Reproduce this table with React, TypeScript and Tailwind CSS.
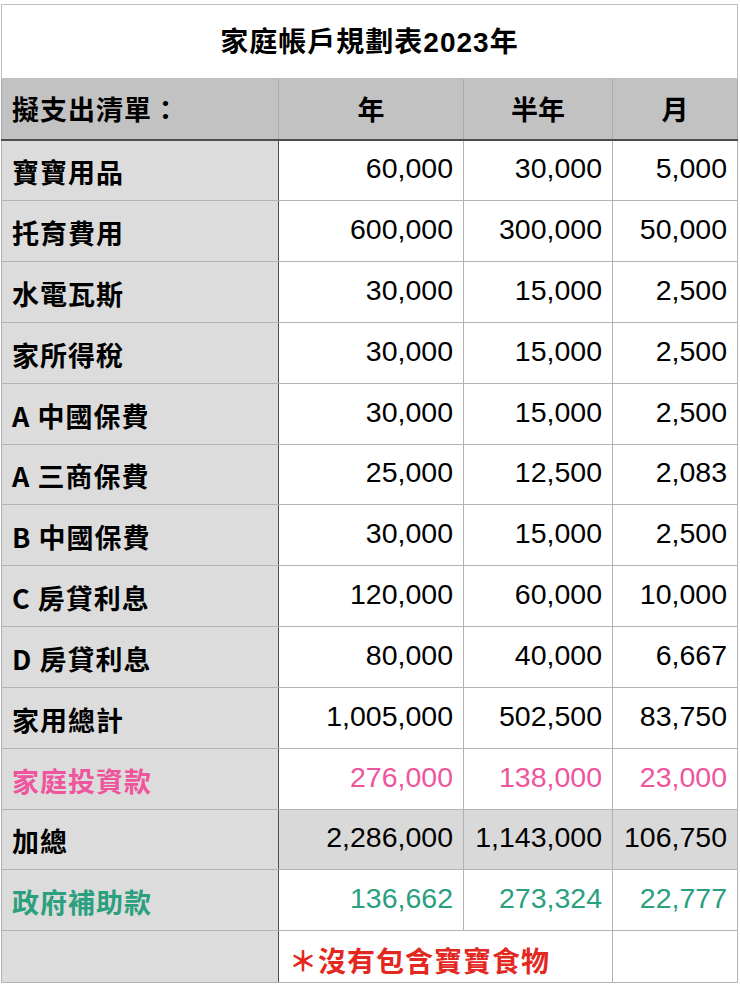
import React from 'react';

type Row = {
  label: string;
  values: [string, string, string];
  tone?: 'pink' | 'green' | 'total';
};

const rows: Row[] = [
  { label: '寶寶用品', values: ['60,000', '30,000', '5,000'] },
  { label: '托育費用', values: ['600,000', '300,000', '50,000'] },
  { label: '水電瓦斯', values: ['30,000', '15,000', '2,500'] },
  { label: '家所得稅', values: ['30,000', '15,000', '2,500'] },
  { label: 'A 中國保費', values: ['30,000', '15,000', '2,500'] },
  { label: 'A 三商保費', values: ['25,000', '12,500', '2,083'] },
  { label: 'B 中國保費', values: ['30,000', '15,000', '2,500'] },
  { label: 'C 房貸利息', values: ['120,000', '60,000', '10,000'] },
  { label: 'D 房貸利息', values: ['80,000', '40,000', '6,667'] },
  { label: '家用總計', values: ['1,005,000', '502,500', '83,750'] },
  { label: '家庭投資款', values: ['276,000', '138,000', '23,000'], tone: 'pink' },
  { label: '加總', values: ['2,286,000', '1,143,000', '106,750'], tone: 'total' },
  { label: '政府補助款', values: ['136,662', '273,324', '22,777'], tone: 'green' },
];

const cjk = "font-['Noto_Sans_CJK_TC','Noto_Sans_CJK_SC',sans-serif]";
const num = "font-['Liberation_Sans',Arial,sans-serif]";

export default function App() {
  return (
    <div className="w-[740px] h-[989px] bg-white pt-[4px] pl-[1px]">
      <table className="w-[736px] border-collapse table-fixed text-black">
        <colgroup>
          <col className="w-[277px]" />
          <col className="w-[185px]" />
          <col className="w-[149px]" />
          <col className="w-[125px]" />
        </colgroup>
        <tbody>
          {/* Title */}
          <tr className="h-[74px]">
            <td
              colSpan={4}
              className={`border border-[#bdbdbd] text-center align-middle text-[28px] font-bold tracking-[1px] ${cjk}`}
            >
              家庭帳戶規劃表<span className={num}>2023</span>年
            </td>
          </tr>

          {/* Header */}
          <tr className="h-[61px] bg-[#c1c2c1]">
            <td className={`border border-[#aaaaaa] border-b-[#4d4d4d] border-b-2 pl-[10px] text-[27px] font-bold tracking-[1px] ${cjk}`}>
              擬支出清單：
            </td>
            <td className={`border border-[#aaaaaa] border-b-[#4d4d4d] border-b-2 text-center text-[27px] font-bold ${cjk}`}>年</td>
            <td className={`border border-[#aaaaaa] border-b-[#4d4d4d] border-b-2 text-center text-[27px] font-bold ${cjk}`}>半年</td>
            <td className={`border border-[#aaaaaa] border-b-[#4d4d4d] border-b-2 text-center text-[27px] font-bold ${cjk}`}>月</td>
          </tr>

          {rows.map((r, idx) => {
            const color =
              r.tone === 'pink' ? 'text-[#ee559c]' : r.tone === 'green' ? 'text-[#2ba07f]' : 'text-black';
            const bg = r.tone === 'total' ? 'bg-[#d9d9d9]' : 'bg-white';
            const h = idx % 6 === 5 ? 'h-[60px]' : 'h-[61px]';
            return (
              <tr key={r.label} className={h}>
                <td
                  className={`border border-[#b3b3b3] border-r-[#4d4d4d] bg-[#dcdcdc] pl-[10px] pt-[4px] text-[27px] font-bold tracking-[1px] whitespace-nowrap ${cjk} ${color}`}
                >
                  {r.label}
                </td>
                {r.values.map((v, i) => (
                  <td
                    key={i}
                    className={`border border-[#b3b3b3] pr-[10px] pb-[4px] text-right text-[28.5px] ${num} ${bg} ${color}`}
                  >
                    {v}
                  </td>
                ))}
              </tr>
            );
          })}

          {/* Note row */}
          <tr className="h-[52px]">
            <td className="border border-[#b3b3b3] border-r-[#4d4d4d] bg-[#dcdcdc]" />
            <td
              colSpan={2}
              className={`border border-[#b3b3b3] pl-[10px] pt-[6px] text-[28px] font-bold tracking-[1px] text-[#e3281f] whitespace-nowrap ${cjk}`}
            >
              ＊沒有包含寶寶食物
            </td>
            <td className="border border-[#b3b3b3]" />
          </tr>
        </tbody>
      </table>
    </div>
  );
}
